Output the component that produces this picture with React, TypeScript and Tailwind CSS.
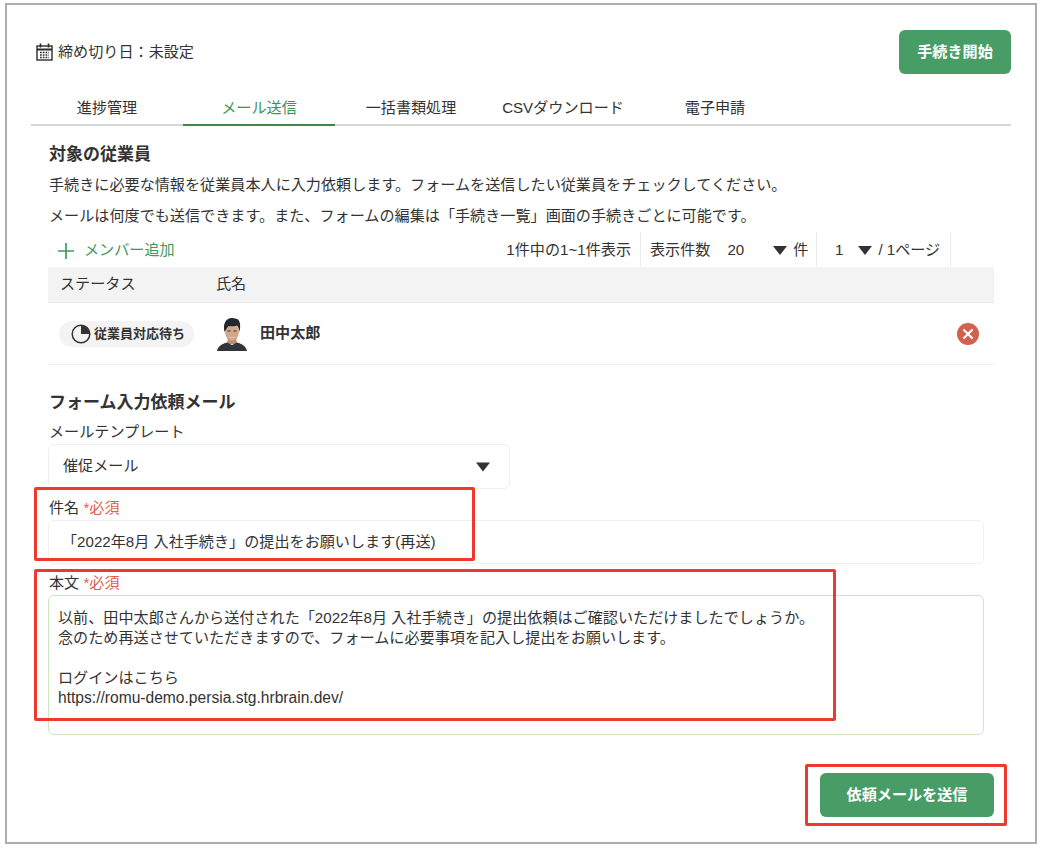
const tabs = ['進捗管理', 'メール送信', '一括書類処理', 'CSVダウンロード', '電子申請']

function Triangle({ className = '' }: { className?: string }) {
  return (
    <svg className={className} viewBox="0 0 14 9" fill="#333">
      <path d="M0 0h14L7 9z" />
    </svg>
  )
}

function CalendarIcon() {
  return (
    <svg width="17" height="18" viewBox="0 0 17 18" fill="none" stroke="#2b2b2b">
      <rect x="1" y="3" width="15" height="14" strokeWidth="1.4" />
      <path d="M1 6.500h15" strokeWidth="2" />
      <path d="M4.500 0.500v4M12.500 0.500v4" strokeWidth="1.600" />
      <path d="M4 9.500h9M4 12h9M4 14.500h9" strokeWidth="1.500" strokeDasharray="1.700 1.100" />
    </svg>
  )
}

function PieIcon() {
  return (
    <svg width="20" height="20" viewBox="0 0 20 20" className="shrink-0">
      <circle cx="10" cy="10" r="8.800" fill="none" stroke="#333" strokeWidth="1.500" />
      <path d="M10 10V1.500A8.500 8.500 0 0 1 18.500 10z" fill="#333" />
    </svg>
  )
}

function Avatar() {
  return (
    <svg width="34" height="34" viewBox="0 0 34 34" className="shrink-0">
      {/* neck */}
      <path d="M11 20h8l1 7h-10z" fill="#b98d72" />
      {/* shirt */}
      <path d="M0 34c1-5 5-7 10-8.500l5 2.500 5-2.500c5 1.500 9 3.500 10 8.500z" fill="#2f353a" />
      {/* face */}
      <ellipse cx="15" cy="15" rx="7" ry="9" fill="#d2a88d" />
      <path d="M11.500 19c2 2 5 2 7 0-1 2.500-6 2.500-7 0z" fill="#fff" />
      <path d="M10.500 14h3M16.500 14h3" stroke="#3a2c26" strokeWidth="1.100" />
      {/* hair */}
      <path d="M7.500 15C5.500 7 9 1 15 1c3 0 4 1 5 1 3 1 4 6 2.500 13-.5-3-1-5-2.500-6.500-3 1-6 1-8.500.5C10 10.500 9 12.500 7.500 15z" fill="#23262a" />
    </svg>
  )
}

function Required() {
  return <span className="text-[#e0604f]"> *必須</span>
}

export default function App() {
  return (
    <div
      className="w-[1048px] h-[854px] bg-white pt-[3px] pl-[5px] text-[15.12px] text-[#333]"
      style={{ fontFamily: '"Liberation Sans", "Noto Sans CJK JP", sans-serif' }}
    >
      <div className="relative w-[1032px] h-[841px] border-2 border-[#aeaeae] px-[24px] pt-[25px]">
        {/* Header */}
        <div className="flex items-center justify-between h-[44px]">
          <div className="flex items-center gap-[5px] pl-[5px]">
            <CalendarIcon />
            <span>締め切り日：未設定</span>
          </div>
          <button className="w-[112px] h-[44px] rounded-[6px] bg-[#489c66] text-white font-bold">
            手続き開始
          </button>
        </div>

        {/* Tabs */}
        <div className="flex mt-[16px] h-[36px] border-b-2 border-[#d6d6d6]">
          {tabs.map((tab, i) => (
            <div
              key={tab}
              className={`w-[152px] h-[36px] flex items-center justify-center pt-[2px] ${
                i === 1 ? 'text-[#3f9350] border-b-2 border-[#3a8a45]' : 'border-b-2 border-transparent'
              }`}
            >
              {tab}
            </div>
          ))}
        </div>

        <div className="px-[17px]">
          <h2 className="mt-[17px] pl-px h-[24px] leading-[24px] text-[17px] font-bold">対象の従業員</h2>
          <p className="mt-[8px] pl-px h-[20px] leading-[20px]">
            手続きに必要な情報を従業員本人に入力依頼します。フォームを送信したい従業員をチェックしてください。
          </p>
          <p className="mt-[11px] pl-px h-[20px] leading-[20px]">
            メールは何度でも送信できます。また、フォームの編集は「手続き一覧」画面の手続きごとに可能です。
          </p>

          {/* Toolbar */}
          <div className="flex items-stretch h-[35px] mt-[6px] pr-[43px] whitespace-nowrap">
            <div className="flex items-center pl-[10px] pt-[2px] gap-[10px] text-[#3f9a5e]">
              <svg width="16" height="16" viewBox="0 0 16 16" stroke="#3f9a5e" strokeWidth="1.700">
                <path d="M8 0v16M0 8h16" />
              </svg>
              <span>メンバー追加</span>
            </div>
            <div className="ml-auto flex items-center pt-[2px] pr-[9px] border-r border-[#ececec]">1件中の1~1件表示</div>
            <div className="w-[176px] flex items-center pt-[2px] pl-[9px] border-r border-[#ececec]">
              <span>表示件数</span>
              <span className="ml-[17px]">20</span>
              <Triangle className="w-[14px] h-[9px] ml-[29px]" />
              <span className="ml-[6px]">件</span>
            </div>
            <div className="w-[134px] flex items-center pt-[2px] pl-[18px] border-r border-[#ececec]">
              <span>1</span>
              <Triangle className="w-[14px] h-[9px] ml-[15px]" />
              <span className="ml-[6px]">/ 1ページ</span>
            </div>
          </div>

          {/* Table */}
          <div className="flex items-center h-[36px] bg-[#f3f3f3] border-b border-[#e8e8e8]">
            <span className="w-[168px] pl-[12px]">ステータス</span>
            <span>氏名</span>
          </div>
          <div className="flex items-center h-[62px] border-b border-[#eeeeee] pl-[11px] pr-[15px]">
            <div className="w-[158px]">
              <div className="flex items-center w-[135px] h-[26px] rounded-full bg-[#f3f3f3] pl-[12px] gap-[3px] text-[13px] font-bold whitespace-nowrap">
                <PieIcon />
                <span>従業員対応待ち</span>
              </div>
            </div>
            <Avatar />
            <span className="ml-[9px] font-bold">田中太郎</span>
            <svg width="22" height="22" viewBox="0 0 22 22" className="ml-auto">
              <circle cx="11" cy="11" r="11" fill="#d1604f" />
              <path d="M7 7l8 8M15 7l-8 8" stroke="#fff" strokeWidth="2.200" strokeLinecap="round" />
            </svg>
          </div>

          {/* Mail form */}
          <h2 className="mt-[26px] pl-px h-[24px] leading-[24px] text-[17px] font-bold">フォーム入力依頼メール</h2>
          <div className="mt-[7px] pl-px h-[20px] leading-[20px]">メールテンプレート</div>
          <div className="mt-[2px] flex items-center justify-between w-[462px] h-[45px] border border-[#eeeeee] rounded-[6px] pl-[14px] pr-[19px]">
            <span>催促メール</span>
            <Triangle className="w-[14px] h-[10px]" />
          </div>

          <div className="mt-[9px] pl-px h-[20px] leading-[20px]">
            件名
            <Required />
          </div>
          <div className="mt-[2px] flex items-center w-[936px] h-[44px] border border-[#f0f0f0] rounded-[6px] pl-[13px]">
            「2022年8月 入社手続き」の提出をお願いします(再送)
          </div>

          <div className="mt-[9px] pl-px h-[20px] leading-[20px]">
            本文
            <Required />
          </div>
          <div className="mt-[2px] w-[936px] h-[140px] border border-[#c9e8bd] rounded-[6px] pl-[9px] pt-[12px] leading-[20px] whitespace-pre-line">
            {'以前、田中太郎さんから送付された「2022年8月 入社手続き」の提出依頼はご確認いただけましたでしょうか。\n念のため再送させていただきますので、フォームに必要事項を記入し提出をお願いします。\n\nログインはこちら\n'}
            <span className="text-[15.6px]">https://romu-demo.persia.stg.hrbrain.dev/</span>
          </div>

          <div className="flex justify-end mt-[38px]">
            <button className="w-[174px] h-[44px] rounded-[6px] bg-[#489c66] text-white font-bold">
              依頼メールを送信
            </button>
          </div>
        </div>

        {/* Red annotation frames */}
        <div className="absolute left-[27px] top-[482px] w-[441px] h-[74px] border-[3px] border-[#ee3a2e] rounded-[2px]" />
        <div className="absolute left-[27px] top-[564px] w-[802px] h-[152px] border-[3px] border-[#ee3a2e] rounded-[2px]" />
        <div className="absolute left-[798px] top-[759px] w-[202px] h-[62px] border-[3px] border-[#ee3a2e] rounded-[2px]" />
      </div>
    </div>
  )
}
